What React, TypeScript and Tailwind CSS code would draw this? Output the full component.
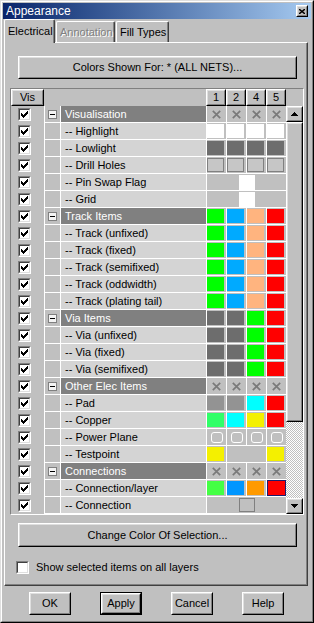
import React from 'react';

type CellT =
  | { k: 'sw'; c: string }
  | { k: 'x' }
  | { k: 'o' }
  | { k: 'pp' }
  | { k: 'sel' }
  | { k: 'merge'; n: 2 | 4; inner: 'white' | 'outline' | 'none' };

type RowT = { name: string; group?: boolean; cells: CellT[] };

const X: CellT = { k: 'x' };
const sw = (c: string): CellT => ({ k: 'sw', c });

const TRACK = [sw('bg-[#00ff00]'), sw('bg-[#00aaff]'), sw('bg-[#ffb47f]'), sw('bg-[#ff0000]')];
const VIA = [sw('bg-[#6d6d6d]'), sw('bg-[#6d6d6d]'), sw('bg-[#00ff00]'), sw('bg-[#ff0000]')];

const ROWS: RowT[] = [
  { name: 'Visualisation', group: true, cells: [X, X, X, X] },
  { name: '-- Highlight', cells: [sw('bg-white'), sw('bg-white'), sw('bg-white'), sw('bg-white')] },
  { name: '-- Lowlight', cells: [sw('bg-[#6d6d6d]'), sw('bg-[#6d6d6d]'), sw('bg-[#6d6d6d]'), sw('bg-[#6d6d6d]')] },
  { name: '-- Drill Holes', cells: [{ k: 'o' }, { k: 'o' }, { k: 'o' }, { k: 'o' }] },
  { name: '-- Pin Swap Flag', cells: [{ k: 'merge', n: 4, inner: 'white' }] },
  { name: '-- Grid', cells: [{ k: 'merge', n: 4, inner: 'white' }] },
  { name: 'Track Items', group: true, cells: TRACK },
  { name: '-- Track (unfixed)', cells: TRACK },
  { name: '-- Track (fixed)', cells: TRACK },
  { name: '-- Track (semifixed)', cells: TRACK },
  { name: '-- Track (oddwidth)', cells: TRACK },
  { name: '-- Track (plating tail)', cells: TRACK },
  { name: 'Via Items', group: true, cells: VIA },
  { name: '-- Via (unfixed)', cells: VIA },
  { name: '-- Via (fixed)', cells: VIA },
  { name: '-- Via (semifixed)', cells: VIA },
  { name: 'Other Elec Items', group: true, cells: [X, X, X, X] },
  { name: '-- Pad', cells: [sw('bg-[#939393]'), sw('bg-[#939393]'), sw('bg-[#00ffff]'), sw('bg-[#ff0000]')] },
  { name: '-- Copper', cells: [sw('bg-[#30ff68]'), sw('bg-[#00ffff]'), sw('bg-[#f4f000]'), sw('bg-[#ff0000]')] },
  { name: '-- Power Plane', cells: [{ k: 'pp' }, { k: 'pp' }, { k: 'pp' }, { k: 'pp' }] },
  { name: '-- Testpoint', cells: [sw('bg-[#f4f000]'), { k: 'merge', n: 2, inner: 'none' }, sw('bg-[#f4f000]')] },
  { name: 'Connections', group: true, cells: [X, X, X, X] },
  { name: '-- Connection/layer', cells: [sw('bg-[#44ff44]'), sw('bg-[#0096ff]'), sw('bg-[#ff9a00]'), { k: 'sel' }] },
  { name: '-- Connection', cells: [{ k: 'merge', n: 4, inner: 'outline' }] },
];

function Raised({ className = '', innerClassName = '', children }: { className?: string; innerClassName?: string; children?: React.ReactNode }) {
  return (
    <div className={`border border-t-white border-l-white border-r-black border-b-black ${className}`}>
      <div className={`w-full h-full border border-t-[#dfdfdf] border-l-[#dfdfdf] border-r-[#808080] border-b-[#808080] flex items-center justify-center ${innerClassName}`}>
        {children}
      </div>
    </div>
  );
}

const CHECK_RECTS: [number, number, number][] = [
  [6, 0, 1], [5, 1, 2], [0, 2, 1], [4, 2, 3], [0, 3, 2], [3, 3, 3], [0, 4, 5], [1, 5, 3], [2, 6, 1],
];

function Check({ checked }: { checked: boolean }) {
  return (
    <div className="w-[13px] h-[13px] border border-t-[#808080] border-l-[#808080] border-r-white border-b-white">
      <div className="w-full h-full border border-t-[#404040] border-l-[#404040] border-r-[#dfdfdf] border-b-[#dfdfdf] bg-white flex items-center justify-center">
        {checked && (
          <svg width="7" height="7" viewBox="0 0 7 7" shapeRendering="crispEdges">
            {CHECK_RECTS.map(([x, y, w], i) => (
              <rect key={i} x={x} y={y} width={w} height={1} fill="#000" />
            ))}
          </svg>
        )}
      </div>
    </div>
  );
}

function XMark() {
  return (
    <svg width="9" height="9" viewBox="0 0 9 9">
      <path d="M0.8 0.8 L8.2 8.2 M8.2 0.8 L0.8 8.2" stroke="#7a7a7a" strokeWidth="1.7" />
    </svg>
  );
}

function ColorCell({ c }: { c: CellT }) {
  const base = 'h-[17px] border-l border-b border-white bg-[#c0c0c0] flex';
  if (c.k === 'merge') {
    const w = c.n === 4 ? 'w-[80px]' : 'w-[40px]';
    return (
      <div className={`${base} ${w} items-center justify-center`}>
        {c.inner === 'white' && <div className="w-[16px] h-[15px] bg-white" />}
        {c.inner === 'outline' && <div className="w-[16px] h-[14px] border border-[#808080]" />}
      </div>
    );
  }
  if (c.k === 'sw') {
    return (
      <div className={`${base} w-[20px] items-start`}>
        <div className={`w-[17px] h-[14px] mt-px ${c.c}`} />
      </div>
    );
  }
  if (c.k === 'o') {
    return (
      <div className={`${base} w-[20px] items-start`}>
        <div className="w-[17px] h-[14px] mt-px border border-[#808080] bg-[#c6c6c6]" />
      </div>
    );
  }
  if (c.k === 'pp') {
    return (
      <div className={`${base} w-[20px] items-center justify-center`}>
        <div className="w-[12px] h-[11px] rounded-[3px] border border-white" />
      </div>
    );
  }
  if (c.k === 'sel') {
    return (
      <div className={`${base} w-[20px]`}>
        <div className="w-full h-full border border-[#1c1c6c] bg-[#ff0000]" />
      </div>
    );
  }
  return (
    <div className={`${base} w-[20px] items-center justify-center`}>
      <XMark />
    </div>
  );
}

function Row({ r }: { r: RowT }) {
  return (
    <div className="flex h-[17px]">
      <div className="w-[33px] pl-[7px] pt-[2px]">
        <Check checked />
      </div>
      <div className="w-[16px] h-[17px] border-l border-b border-white bg-[#c0c0c0] flex items-center pl-[3px]">
        {r.group && (
          <div className="w-[9px] h-[9px] border border-[#808080] bg-[#f4f4f4] flex items-center justify-center">
            <div className="w-[5px] h-px bg-black" />
          </div>
        )}
      </div>
      <div
        className={`w-[146px] h-[17px] border-l border-b border-white pl-[4px] flex items-center ${
          r.group ? 'bg-[#808080] text-white' : 'bg-[#d4d4d4] text-black'
        }`}
      >
        <span className="whitespace-nowrap leading-none">{r.name}</span>
      </div>
      {r.cells.map((c, i) => (
        <ColorCell key={i} c={c} />
      ))}
    </div>
  );
}

function Arrow({ up }: { up: boolean }) {
  return (
    <svg width="7" height="4" viewBox="0 0 7 4" shapeRendering="crispEdges">
      {up ? <polygon points="3.5,0 7,4 0,4" fill="#000" /> : <polygon points="0,0 7,0 3.5,4" fill="#000" />}
    </svg>
  );
}

export default function App() {
  return (
    <div className="font-['Liberation_Sans',Arial,sans-serif] text-[11px] text-black w-[314px] h-[623px] bg-[#c0c0c0] border border-t-[#dfdfdf] border-l-[#dfdfdf] border-r-black border-b-black">
      <div className="w-full h-full border border-t-white border-l-white border-r-[#808080] border-b-[#808080] p-px flex flex-col">
        {/* Title bar */}
        <div className="h-[16px] shrink-0 bg-linear-to-r from-[#0a246a] to-[#a6caf0] flex items-center pl-[3px] pr-[3px]">
          <span className="text-white text-[12px] leading-none">Appearance</span>
          <Raised className="ml-auto w-[12px] h-[12px] bg-[#c0c0c0]">
            <svg width="6" height="5" viewBox="0 0 6 5">
              <path d="M0 0 L6 5 M6 0 L0 5" stroke="#000" strokeWidth="1.4" />
            </svg>
          </Raised>
        </div>

        {/* Tabs */}
        <div className="h-[23px] shrink-0 flex items-end pl-px">
          <div className="relative z-10 -mb-px w-[51px] h-[24px] bg-[#c0c0c0] border-l border-t border-white border-r border-r-[#404040] rounded-tl-[2px] rounded-tr-[2px]">
            <div className="w-full h-full border-r border-r-[#808080] flex items-center pl-[3px]">Electrical</div>
          </div>
          <div className="ml-px w-[59px] h-[21px] border-l border-t border-white border-r border-r-[#404040] rounded-tl-[2px] rounded-tr-[2px]">
            <div className="w-full h-full border-r border-r-[#808080] flex items-center pl-[3px] text-[#808080] [text-shadow:1px_1px_0_#ffffff]">
              Annotation
            </div>
          </div>
          <div className="ml-px w-[53px] h-[21px] border-l border-t border-white border-r border-r-[#404040] rounded-tl-[2px] rounded-tr-[2px]">
            <div className="w-full h-full border-r border-r-[#808080] flex items-center pl-[3px]">Fill Types</div>
          </div>
        </div>

        {/* Panel */}
        <div className="ml-px w-[304px] h-[544px] shrink-0 border border-t-white border-l-white border-r-[#404040] border-b-[#404040]">
          <div className="w-full h-full border-r border-b border-r-[#808080] border-b-[#808080] flex flex-col">
            <Raised className="mt-[13px] ml-[13px] w-[279px] h-[23px] shrink-0">Colors Shown For: * (ALL NETS)...</Raised>

            {/* Table */}
            <div className="mt-[9px] ml-[5px] w-[294px] shrink-0 border border-t-[#808080] border-l-[#808080] border-r-white border-b-white">
              <div className="flex h-[17px]">
                <Raised className="w-[33px] h-[17px]">Vis</Raised>
                <div className="w-[162px]" />
                {['1', '2', '4', '5'].map((n) => (
                  <Raised key={n} className="w-[20px] h-[17px]">
                    {n}
                  </Raised>
                ))}
                <div className="w-[17px]" />
              </div>
              <div className="flex">
                <div className="w-[275px] flex flex-col">
                  {ROWS.map((r) => (
                    <Row key={r.name} r={r} />
                  ))}
                </div>
                <div className="w-[17px] h-[408px] flex flex-col">
                  <Raised className="w-[17px] h-[16px] shrink-0">
                    <Arrow up />
                  </Raised>
                  <Raised className="w-[17px] h-[300px] shrink-0" />
                  <div className="w-[17px] h-[76px] shrink-0 bg-[repeating-conic-gradient(#ffffff_0_25%,#c0c0c0_0_50%)] bg-[length:2px_2px]" />
                  <Raised className="w-[17px] h-[16px] shrink-0">
                    <Arrow up={false} />
                  </Raised>
                </div>
              </div>
            </div>

            <Raised className="mt-[8px] ml-[13px] w-[279px] h-[24px] shrink-0">Change Color Of Selection...</Raised>

            <div className="mt-[14px] ml-[11px] flex items-center gap-[7px]">
              <Check checked={false} />
              <span className="leading-none">Show selected items on all layers</span>
            </div>
          </div>
        </div>

        {/* Bottom buttons */}
        <div className="mt-[6px] ml-[26px] flex gap-[29px]">
          <Raised className="w-[42px] h-[23px]">OK</Raised>
          <div className="w-[42px] h-[23px] border border-black">
            <Raised className="w-full h-full">Apply</Raised>
          </div>
          <Raised className="w-[42px] h-[23px]">Cancel</Raised>
          <Raised className="w-[42px] h-[23px]">Help</Raised>
        </div>
      </div>
    </div>
  );
}
